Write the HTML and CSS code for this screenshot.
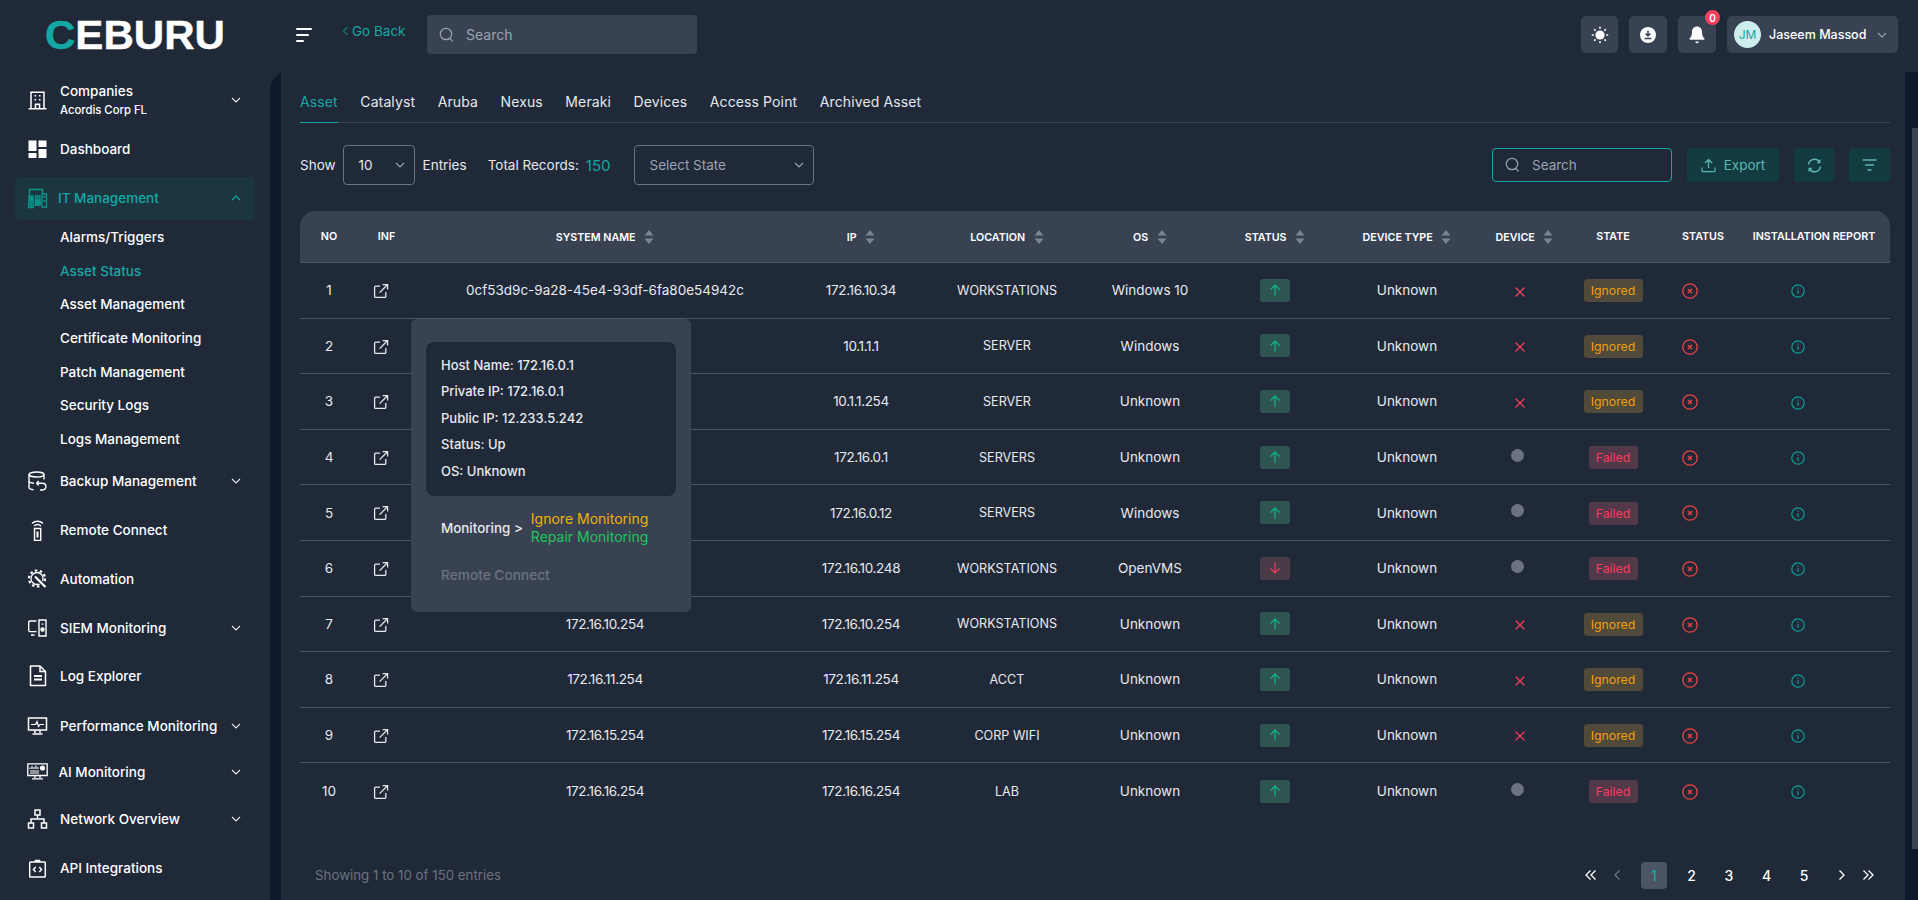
FILE: index.html
```html
<!DOCTYPE html>
<html lang="en">
<head>
<meta charset="utf-8">
<title>Asset Status</title>
<link rel="stylesheet" href="styles.css">
</head>
<body>
<svg class="defs" width="0" height="0" aria-hidden="true">
  <symbol id="i-chev" viewBox="0 0 12 12"><path d="M2 4l4 4 4-4" fill="none" stroke="currentColor" stroke-width="1.1"/></symbol>
  <symbol id="i-sort" viewBox="0 0 10 14"><path d="M5 0l4.500 5.500h-9z M5 14l4.500-5.500h-9z" fill="#7b8494"/></symbol>
  <symbol id="i-ext" viewBox="0 0 16 16"><path d="M7 3.200H2.600c-.6 0-1 .4-1 1v9.200c0 .6.400 1 1 1h9.200c.6 0 1-.4 1-1V9M6.600 9.600L14.400 1.800M9.600 1.600h5v5" fill="none" stroke="#e5e7eb" stroke-width="1.300"/></symbol>
  <symbol id="i-up" viewBox="0 0 14 14"><path d="M7 12.500V2M2.500 6.500L7 2l4.500 4.500" fill="none" stroke="#10b981" stroke-width="1.200"/></symbol>
  <symbol id="i-down" viewBox="0 0 14 14"><path d="M7 1.500V12M2.500 7.500L7 12l4.500-4.500" fill="none" stroke="#f43f5e" stroke-width="1.200"/></symbol>
  <symbol id="i-x" viewBox="0 0 12 12"><path d="M1.500 1.500l9 9M10.500 1.500l-9 9" fill="none" stroke="#f43f5e" stroke-width="1.300"/></symbol>
  <symbol id="i-cx" viewBox="0 0 16 16"><circle cx="8" cy="8" r="7.200" fill="none" stroke="#ef4444" stroke-width="1.300"/><path d="M6 6l4 4M10 6l-4 4" fill="none" stroke="#ef4444" stroke-width="1.300"/></symbol>
  <symbol id="i-info" viewBox="0 0 14 14"><circle cx="7" cy="7" r="6.200" fill="none" stroke="#0f9d9a" stroke-width="1.200"/><path d="M7 6.200v3.800M7 3.600v1.200" fill="none" stroke="#0f9d9a" stroke-width="1.200"/></symbol>
  <symbol id="i-prev" viewBox="0 0 10 12"><path d="M7.500 1.500L3 6l4.500 4.500" fill="none" stroke="currentColor" stroke-width="1.300"/></symbol>
  <symbol id="i-next" viewBox="0 0 10 12"><path d="M2.500 1.500L7 6l-4.500 4.500" fill="none" stroke="currentColor" stroke-width="1.300"/></symbol>
  <symbol id="i-first" viewBox="0 0 12 12"><path d="M5.500 1.500L1 6l4.500 4.500M10.500 1.500L6 6l4.500 4.500" fill="none" stroke="currentColor" stroke-width="1.300"/></symbol>
  <symbol id="i-last" viewBox="0 0 12 12"><path d="M1.500 1.500L6 6l-4.500 4.500M6.500 1.500L11 6l-4.500 4.500" fill="none" stroke="currentColor" stroke-width="1.300"/></symbol>
</svg>

<header class="topbar">
  <div class="brand">
    <svg class="logo" width="190" height="45" viewBox="0 0 190 45"><text x="1" y="37" textLength="180" lengthAdjust="spacingAndGlyphs" class="logo-text"><tspan class="logo-c">C</tspan>EBURU</text></svg>
  </div>
  <button class="hamburger" aria-label="Menu"><span class="bar-a"></span><span class="bar-b"></span><span class="bar-c"></span></button>
  <a class="goback"><svg width="7" height="10" viewBox="0 0 7 10"><path d="M5.500 1L1.500 5l4 4" fill="none" stroke="currentColor" stroke-width="1"/></svg>Go Back</a>
  <div class="top-search">
    <svg width="15" height="16" viewBox="0 0 15 16"><circle cx="7" cy="7" r="5.700" fill="none" stroke="#9ca3af" stroke-width="1.200"/><path d="M11 11.500l2.500 3" stroke="#9ca3af" stroke-width="1.200"/></svg>
    <span>Search</span>
  </div>
  <div class="top-actions">
    <button class="tbtn tbtn-sun" aria-label="Theme">
      <svg width="18" height="18" viewBox="0 0 18 18"><circle cx="9" cy="9" r="4.600" fill="#fff"/><g stroke="#fff" stroke-width="1.600"><path d="M9 .8v2M9 15.200v2M.8 9h2M15.200 9h2M3.200 3.200l1.400 1.400M13.400 13.400l1.400 1.400M3.200 14.800l1.400-1.400M13.400 4.600l1.400-1.400"/></g></svg>
    </button>
    <button class="tbtn" aria-label="Download">
      <svg width="16" height="16" viewBox="0 0 16 16"><circle cx="8" cy="8" r="8" fill="#fff"/><path d="M8 3.500v5M5.500 6.500L8 9l2.500-2.500M4.500 11.500h7" fill="none" stroke="#394253" stroke-width="1.500"/></svg>
    </button>
    <button class="tbtn tbtn-bell" aria-label="Notifications">
      <svg width="16" height="18" viewBox="0 0 16 18"><path d="M8 .5c-3 0-5 2.300-5 5.200 0 4-1.200 5.500-2.400 6.800-.4.500-.1 1.200.5 1.200h13.800c.6 0 .9-.7.5-1.200C14.200 11.200 13 9.700 13 5.700 13 2.800 11 .5 8 .5z" fill="#fff"/><path d="M6.200 15.500h3.600c-.2 1-.9 1.700-1.800 1.700s-1.600-.7-1.800-1.700z" fill="#fff"/></svg>
      <span class="badge">0</span>
    </button>
    <div class="user">
      <span class="avatar">JM</span>
      <span class="user-name">Jaseem Massod</span>
      <svg class="user-chev" width="12" height="12"><use href="#i-chev"/></svg>
    </div>
  </div>
</header>

<div class="shell">
  <aside class="sidebar">
    <div class="nav-item nav-company">
      <svg class="nav-icon" width="20" height="20" viewBox="0 0 20 20"><path d="M3.500 18.500V2.200h13v16.300M1 18.700h18M8 18.500v-4.300h4v4.300" fill="none" stroke="#fff" stroke-width="1.500"/><path d="M7 5h1.600v1.600H7zM11.400 5H13v1.600h-1.600zM7 9h1.600v1.600H7zM11.400 9H13v1.600h-1.600z" fill="#fff"/></svg>
      <span class="nav-label"><span>Companies</span><small>Acordis Corp FL</small></span>
      <svg class="nav-chev" width="12" height="12"><use href="#i-chev"/></svg>
    </div>
    <div class="nav-item nav-dash">
      <svg class="nav-icon" width="20" height="20" viewBox="0 0 20 20"><path d="M1 1.500h8v10.500H1zM11 1.500h8v6.500h-8zM1 14h8v5H1zM11 10h8v9h-8z" fill="#fff"/></svg>
      <span class="nav-label">Dashboard</span>
    </div>
    <div class="nav-item nav-open">
      <svg class="nav-icon" width="20" height="22" viewBox="0 0 20 22" fill="none" stroke="#0d9488" stroke-width="1.300"><path d="M2 9V2.500h13V7"/><path d="M1.500 15v-6h4v6M1 16h5v4.500H1zM8 9h4.500v9H8zM14.500 7H19v13h-4.500z"/><circle cx="3.500" cy="18.300" r="1" fill="#0d9488"/><path d="M9 11h2.500M15.500 10h2.500M15.500 14h2.500"/><path d="M8 13h4.500v5H8zM2 10.500h3v3.500H2z" fill="#0d9488"/></svg>
      <span class="nav-label">IT Management</span>
      <svg class="nav-chev chev-up" width="12" height="12"><use href="#i-chev"/></svg>
    </div>
    <ul class="subnav">
      <li>Alarms/Triggers</li>
      <li class="sub-active">Asset Status</li>
      <li>Asset Management</li>
      <li>Certificate Monitoring</li>
      <li>Patch Management</li>
      <li>Security Logs</li>
      <li>Logs Management</li>
    </ul>
    <div class="nav-item nav-backup">
      <svg class="nav-icon" width="20" height="20" viewBox="0 0 20 20" fill="none" stroke="#fff" stroke-width="1.400"><ellipse cx="9" cy="3.500" rx="7.500" ry="2.500"/><path d="M1.500 3.500v13c0 1.200 2 2 4.500 2.200M16.500 3.500v5M1.500 10c0 1.200 2.500 2 5 2.200"/><path d="M9 12.200h6a3.400 3.400 0 0 1 0 6.800h-2.500M9 12.200l2.200-2.200M9 12.200l2.200 2.200"/></svg>
      <span class="nav-label">Backup Management</span>
      <svg class="nav-chev" width="12" height="12"><use href="#i-chev"/></svg>
    </div>
    <div class="nav-item nav-lift">
      <svg class="nav-icon" width="20" height="22" viewBox="0 0 20 22" fill="none" stroke="#fff" stroke-width="1.400"><path d="M4.500 4.500c3-3 8-3 11 0M6.500 7c2-1.700 5-1.700 7 0"/><path d="M7 9.500h6.200v12H7z"/><path d="M10 12.500v6" stroke-width="2"/></svg>
      <span class="nav-label">Remote Connect</span>
    </div>
    <div class="nav-item">
      <svg class="nav-icon" width="20" height="20" viewBox="0 0 20 20" fill="none" stroke="#fff"><circle cx="9.500" cy="9.500" r="8" stroke-width="2.200" stroke-dasharray="2.600 2.430"/><circle cx="9.500" cy="9.500" r="6" stroke-width="1.300"/><path d="M7 7l11 11" stroke="#202938" stroke-width="4.500"/><path d="M7.500 7.500l10.500 10.500" stroke-width="2.200"/></svg>
      <span class="nav-label">Automation</span>
    </div>
    <div class="nav-item nav-siem">
      <svg class="nav-icon" width="20" height="18" viewBox="0 0 20 18" fill="none" stroke="#fff" stroke-width="1.400"><path d="M9 2H2.500c-.8 0-1.300.5-1.300 1.300v8c0 .8.500 1.300 1.300 1.300H9M3.500 16H7"/><path d="M11.500 1h7v16h-7z"/><circle cx="15" cy="10.500" r="1.500" fill="#fff"/><path d="M15 4.500v1.200" stroke-width="1.800"/></svg>
      <span class="nav-label">SIEM Monitoring</span>
      <svg class="nav-chev" width="12" height="12"><use href="#i-chev"/></svg>
    </div>
    <div class="nav-item nav-log">
      <svg class="nav-icon" width="20" height="22" viewBox="0 0 20 22" fill="none" stroke="#fff" stroke-width="1.500"><path d="M3 1h9.500L18 6.500v14H3z" stroke-linejoin="round"/><path d="M12.500 1v5.500H18"/><path d="M6.500 11h8M6.500 14.500h8" stroke-width="1.800"/></svg>
      <span class="nav-label">Log Explorer</span>
    </div>
    <div class="nav-item nav-perf">
      <svg class="nav-icon" width="20" height="18" viewBox="0 0 20 18" fill="none" stroke="#fff" stroke-width="1.500"><path d="M1 1h18v12H1zM7.500 13v3M12.500 13v3M5 17h10"/><path d="M3.500 7.500h4.500l1.500-3 1.500 5 1.500-2h4" stroke-width="1.200"/></svg>
      <span class="nav-label">Performance Monitoring</span>
      <svg class="nav-chev" width="12" height="12"><use href="#i-chev"/></svg>
    </div>
    <div class="nav-item nav-ai">
      <svg class="nav-icon" width="21" height="17" viewBox="0 0 21 17" fill="none" stroke="#fff" stroke-width="1.100"><path d="M.8.800h19.400v11.700H.8zM8 12.500v2.500M13 12.500v2.500M5 15.800h11" stroke-width="1.300"/><path d="M3 10h9M3 8h9"/><path d="M3 6V4.500M5 6V3M7 6V4M9 6V2.500M11 6V4" stroke-width="1.200"/><circle cx="15.500" cy="5" r="2" fill="#fff"/></svg>
      <span class="nav-label">AI Monitoring</span>
      <svg class="nav-chev" width="12" height="12"><use href="#i-chev"/></svg>
    </div>
    <div class="nav-item nav-net">
      <svg class="nav-icon" width="20" height="20" viewBox="0 0 20 20" fill="none" stroke="#fff" stroke-width="1.500"><path d="M7.500 1h5v5h-5zM1 14h5v5H1zM14 14h5v5h-5zM10 6v4M3.500 14v-4h13v4"/></svg>
      <span class="nav-label">Network Overview</span>
      <svg class="nav-chev" width="12" height="12"><use href="#i-chev"/></svg>
    </div>
    <div class="nav-item">
      <svg class="nav-icon" width="20" height="20" viewBox="0 0 20 20" fill="none" stroke="#fff" stroke-width="1.500"><path d="M3 4h14c.5 0 .8.300.8.800v13.400c0 .5-.3.800-.8.800H3c-.5 0-.8-.3-.8-.8V4.800c0-.5.300-.8.800-.8zM8 4V2.500h4V4"/><path d="M8.200 9L6 11.500 8.200 14M11.800 9l2.200 2.500-2.200 2.500"/></svg>
      <span class="nav-label">API Integrations</span>
    </div>
  </aside>

  <main class="main">
    <div class="panel">
      <nav class="tabs">
        <a class="tab tab-active">Asset</a>
        <a class="tab">Catalyst</a>
        <a class="tab">Aruba</a>
        <a class="tab">Nexus</a>
        <a class="tab">Meraki</a>
        <a class="tab">Devices</a>
        <a class="tab">Access Point</a>
        <a class="tab">Archived Asset</a>
      </nav>

      <div class="toolbar">
        <span class="lbl">Show</span>
        <div class="select select-size"><span>10</span><svg width="12" height="12"><use href="#i-chev"/></svg></div>
        <span class="lbl lbl-entries">Entries</span>
        <span class="lbl lbl-total">Total Records:</span>
        <span class="total-num">150</span>
        <div class="select select-state"><span>Select State</span><svg width="12" height="12"><use href="#i-chev"/></svg></div>
        <div class="tool-search">
          <svg width="15" height="16" viewBox="0 0 15 16"><circle cx="7" cy="7" r="5.700" fill="none" stroke="#9ca3af" stroke-width="1.200"/><path d="M11 11.500l2.500 3" stroke="#9ca3af" stroke-width="1.200"/></svg>
          <span>Search</span>
        </div>
        <button class="tool-btn btn-export"><svg width="15" height="15" viewBox="0 0 15 15"><path d="M7.500 10V1.500M4 5l3.500-3.500L11 5M1 9.500v3.200c0 .6.400 1 1 1h11c.6 0 1-.4 1-1V9.500" fill="none" stroke="#5eb6b3" stroke-width="1.200"/></svg>Export</button>
        <button class="tool-btn btn-icon" aria-label="Refresh"><svg width="15" height="15" viewBox="0 0 15 15"><path d="M1.500 6.500A6 6 0 0 1 12.500 4M13.500 8.500A6 6 0 0 1 2.500 11" fill="none" stroke="#5eb6b3" stroke-width="1.500"/><path d="M13.500 1v4.300H9.500zM1.500 14v-4.300h4z" fill="#5eb6b3"/></svg></button>
        <button class="tool-btn btn-icon btn-filter" aria-label="Filter"><svg width="15" height="12" viewBox="0 0 15 12"><path d="M.5 1h14M3 6h9M5.500 11h4" stroke="#5eb6b3" stroke-width="1.400"/></svg></button>
      </div>

      <div class="table">
        <div class="row head">
          <div class="c">NO</div>
          <div class="c">INF</div>
          <div class="c">SYSTEM NAME <svg class="sort" width="10" height="14"><use href="#i-sort"/></svg></div>
          <div class="c">IP <svg class="sort" width="10" height="14"><use href="#i-sort"/></svg></div>
          <div class="c">LOCATION <svg class="sort" width="10" height="14"><use href="#i-sort"/></svg></div>
          <div class="c">OS <svg class="sort" width="10" height="14"><use href="#i-sort"/></svg></div>
          <div class="c">STATUS <svg class="sort" width="10" height="14"><use href="#i-sort"/></svg></div>
          <div class="c">DEVICE TYPE <svg class="sort" width="10" height="14"><use href="#i-sort"/></svg></div>
          <div class="c">DEVICE <svg class="sort" width="10" height="14"><use href="#i-sort"/></svg></div>
          <div class="c">STATE</div>
          <div class="c">STATUS</div>
          <div class="c c-last">INSTALLATION REPORT</div>
        </div>

        <div class="row">
          <div class="c">1</div><div class="c"><svg class="ext" width="16" height="16"><use href="#i-ext"/></svg></div>
          <div class="c">0cf53d9c-9a28-45e4-93df-6fa80e54942c</div><div class="c num">172.16.10.34</div><div class="c loc">WORKSTATIONS</div><div class="c">Windows 10</div>
          <div class="c"><span class="updown up"><svg width="14" height="14"><use href="#i-up"/></svg></span></div><div class="c">Unknown</div>
          <div class="c"><svg class="dev" width="12" height="12"><use href="#i-x"/></svg></div><div class="c"><span class="pill ignored">Ignored</span></div>
          <div class="c"><svg class="cx" width="16" height="16"><use href="#i-cx"/></svg></div><div class="c c-last"><svg class="info" width="14" height="14"><use href="#i-info"/></svg></div>
        </div>
        <div class="row">
          <div class="c">2</div><div class="c"><svg class="ext" width="16" height="16"><use href="#i-ext"/></svg></div>
          <div class="c"></div><div class="c num">10.1.1.1</div><div class="c loc">SERVER</div><div class="c">Windows</div>
          <div class="c"><span class="updown up"><svg width="14" height="14"><use href="#i-up"/></svg></span></div><div class="c">Unknown</div>
          <div class="c"><svg class="dev" width="12" height="12"><use href="#i-x"/></svg></div><div class="c"><span class="pill ignored">Ignored</span></div>
          <div class="c"><svg class="cx" width="16" height="16"><use href="#i-cx"/></svg></div><div class="c c-last"><svg class="info" width="14" height="14"><use href="#i-info"/></svg></div>
        </div>
        <div class="row">
          <div class="c">3</div><div class="c"><svg class="ext" width="16" height="16"><use href="#i-ext"/></svg></div>
          <div class="c"></div><div class="c num">10.1.1.254</div><div class="c loc">SERVER</div><div class="c">Unknown</div>
          <div class="c"><span class="updown up"><svg width="14" height="14"><use href="#i-up"/></svg></span></div><div class="c">Unknown</div>
          <div class="c"><svg class="dev" width="12" height="12"><use href="#i-x"/></svg></div><div class="c"><span class="pill ignored">Ignored</span></div>
          <div class="c"><svg class="cx" width="16" height="16"><use href="#i-cx"/></svg></div><div class="c c-last"><svg class="info" width="14" height="14"><use href="#i-info"/></svg></div>
        </div>
        <div class="row">
          <div class="c">4</div><div class="c"><svg class="ext" width="16" height="16"><use href="#i-ext"/></svg></div>
          <div class="c"></div><div class="c num">172.16.0.1</div><div class="c loc">SERVERS</div><div class="c">Unknown</div>
          <div class="c"><span class="updown up"><svg width="14" height="14"><use href="#i-up"/></svg></span></div><div class="c">Unknown</div>
          <div class="c"><span class="dot"></span></div><div class="c"><span class="pill failed">Failed</span></div>
          <div class="c"><svg class="cx" width="16" height="16"><use href="#i-cx"/></svg></div><div class="c c-last"><svg class="info" width="14" height="14"><use href="#i-info"/></svg></div>
        </div>
        <div class="row">
          <div class="c">5</div><div class="c"><svg class="ext" width="16" height="16"><use href="#i-ext"/></svg></div>
          <div class="c"></div><div class="c num">172.16.0.12</div><div class="c loc">SERVERS</div><div class="c">Windows</div>
          <div class="c"><span class="updown up"><svg width="14" height="14"><use href="#i-up"/></svg></span></div><div class="c">Unknown</div>
          <div class="c"><span class="dot"></span></div><div class="c"><span class="pill failed">Failed</span></div>
          <div class="c"><svg class="cx" width="16" height="16"><use href="#i-cx"/></svg></div><div class="c c-last"><svg class="info" width="14" height="14"><use href="#i-info"/></svg></div>
        </div>
        <div class="row">
          <div class="c">6</div><div class="c"><svg class="ext" width="16" height="16"><use href="#i-ext"/></svg></div>
          <div class="c"></div><div class="c num">172.16.10.248</div><div class="c loc">WORKSTATIONS</div><div class="c">OpenVMS</div>
          <div class="c"><span class="updown down"><svg width="14" height="14"><use href="#i-down"/></svg></span></div><div class="c">Unknown</div>
          <div class="c"><span class="dot"></span></div><div class="c"><span class="pill failed">Failed</span></div>
          <div class="c"><svg class="cx" width="16" height="16"><use href="#i-cx"/></svg></div><div class="c c-last"><svg class="info" width="14" height="14"><use href="#i-info"/></svg></div>
        </div>
        <div class="row">
          <div class="c">7</div><div class="c"><svg class="ext" width="16" height="16"><use href="#i-ext"/></svg></div>
          <div class="c num">172.16.10.254</div><div class="c num">172.16.10.254</div><div class="c loc">WORKSTATIONS</div><div class="c">Unknown</div>
          <div class="c"><span class="updown up"><svg width="14" height="14"><use href="#i-up"/></svg></span></div><div class="c">Unknown</div>
          <div class="c"><svg class="dev" width="12" height="12"><use href="#i-x"/></svg></div><div class="c"><span class="pill ignored">Ignored</span></div>
          <div class="c"><svg class="cx" width="16" height="16"><use href="#i-cx"/></svg></div><div class="c c-last"><svg class="info" width="14" height="14"><use href="#i-info"/></svg></div>
        </div>
        <div class="row">
          <div class="c">8</div><div class="c"><svg class="ext" width="16" height="16"><use href="#i-ext"/></svg></div>
          <div class="c num">172.16.11.254</div><div class="c num">172.16.11.254</div><div class="c loc">ACCT</div><div class="c">Unknown</div>
          <div class="c"><span class="updown up"><svg width="14" height="14"><use href="#i-up"/></svg></span></div><div class="c">Unknown</div>
          <div class="c"><svg class="dev" width="12" height="12"><use href="#i-x"/></svg></div><div class="c"><span class="pill ignored">Ignored</span></div>
          <div class="c"><svg class="cx" width="16" height="16"><use href="#i-cx"/></svg></div><div class="c c-last"><svg class="info" width="14" height="14"><use href="#i-info"/></svg></div>
        </div>
        <div class="row">
          <div class="c">9</div><div class="c"><svg class="ext" width="16" height="16"><use href="#i-ext"/></svg></div>
          <div class="c num">172.16.15.254</div><div class="c num">172.16.15.254</div><div class="c loc">CORP WIFI</div><div class="c">Unknown</div>
          <div class="c"><span class="updown up"><svg width="14" height="14"><use href="#i-up"/></svg></span></div><div class="c">Unknown</div>
          <div class="c"><svg class="dev" width="12" height="12"><use href="#i-x"/></svg></div><div class="c"><span class="pill ignored">Ignored</span></div>
          <div class="c"><svg class="cx" width="16" height="16"><use href="#i-cx"/></svg></div><div class="c c-last"><svg class="info" width="14" height="14"><use href="#i-info"/></svg></div>
        </div>
        <div class="row row-last">
          <div class="c">10</div><div class="c"><svg class="ext" width="16" height="16"><use href="#i-ext"/></svg></div>
          <div class="c num">172.16.16.254</div><div class="c num">172.16.16.254</div><div class="c loc">LAB</div><div class="c">Unknown</div>
          <div class="c"><span class="updown up"><svg width="14" height="14"><use href="#i-up"/></svg></span></div><div class="c">Unknown</div>
          <div class="c"><span class="dot"></span></div><div class="c"><span class="pill failed">Failed</span></div>
          <div class="c"><svg class="cx" width="16" height="16"><use href="#i-cx"/></svg></div><div class="c c-last"><svg class="info" width="14" height="14"><use href="#i-info"/></svg></div>
        </div>

        <div class="popup">
          <div class="popup-info">
            <p>Host Name: 172.16.0.1</p>
            <p>Private IP: 172.16.0.1</p>
            <p>Public IP: 12.233.5.242</p>
            <p>Status: Up</p>
            <p>OS: Unknown</p>
          </div>
          <div class="popup-mon">
            <span>Monitoring &gt;</span>
            <span class="mon-links"><a class="amber">Ignore Monitoring</a><a class="green">Repair Monitoring</a></span>
          </div>
          <div class="popup-remote">Remote Connect</div>
        </div>
      </div>

      <footer class="foot">
        <span class="showing">Showing 1 to 10 of 150 entries</span>
        <div class="pager">
          <span class="pg pg-arrow" aria-label="First"><svg width="12" height="12"><use href="#i-first"/></svg></span>
          <span class="pg pg-arrow pg-dim" aria-label="Previous"><svg width="10" height="12"><use href="#i-prev"/></svg></span>
          <span class="pg pg-cur">1</span>
          <span class="pg">2</span>
          <span class="pg">3</span>
          <span class="pg">4</span>
          <span class="pg">5</span>
          <span class="pg pg-arrow" aria-label="Next"><svg width="10" height="12"><use href="#i-next"/></svg></span>
          <span class="pg pg-arrow" aria-label="Last"><svg width="12" height="12"><use href="#i-last"/></svg></span>
        </div>
      </footer>
    </div>
    <div class="track"><div class="thumb"></div></div>
  </main>
</div>
</body>
</html>
```

FILE: styles.css
```css
* { box-sizing: border-box; }
html, body { margin: 0; height: 100%; }
body {
  background: #202938;
  color: #e8eaee;
  font-family: "Inter", "Liberation Sans", sans-serif;
  font-size: 13.5px;
  overflow: hidden;
  height: 900px;
}
.defs { position: absolute; }
button { font: inherit; border: 0; color: inherit; padding: 0; cursor: pointer; }

/* top bar */
.topbar { height: 72px; display: flex; align-items: center; padding-bottom: 3px; position: relative; }
.brand { width: 296px; padding-left: 44px; display: flex; height: 45px; align-items: center; }
.logo-text { font-family: "Liberation Sans", sans-serif; font-weight: 700; font-size: 40px; fill: #fff; stroke: #fff; stroke-width: .4px; }
.logo-c { fill: #14a8a5; stroke: #14a8a5; }
.hamburger { background: none; width: 17px; height: 14px; display: flex; flex-direction: column; justify-content: space-between; margin-right: 29px; }
.hamburger span { display: block; height: 2px; background: #fff; border-radius: 1px; }
.bar-a { width: 16px; } .bar-b { width: 13px; } .bar-c { width: 8px; }
.goback { color: #14a8a5; width: 85px; font-size: 13.5px; display: flex; gap: 3px; align-items: center; margin-top: -8px; white-space: nowrap; }
.top-search { width: 270px; height: 39px; background: #394253; border-radius: 4px; display: flex; align-items: center; gap: 12px; padding-left: 12px; color: #9ca3af; font-size: 14px; }
.top-actions { margin-left: auto; display: flex; gap: 11px; padding-right: 20px; }
.tbtn { width: 38px; height: 37px; background: #394253; border-radius: 5px; display: flex; align-items: center; justify-content: center; position: relative; }
.tbtn-sun { width: 37px; }
.badge { position: absolute; top: -6px; right: -4px; width: 15px; height: 15px; border-radius: 50%; background: #f43f5e; color: #fff; font-size: 10px; font-weight: 600; display: flex; align-items: center; justify-content: center; }
.user { width: 171px; height: 37px; background: #394253; border-radius: 5px; display: flex; align-items: center; padding-left: 7px; }
.avatar { width: 27px; height: 27px; border-radius: 50%; background: #cdeeeb; color: #14a8a5; display: flex; align-items: center; justify-content: center; font-size: 12px; }
.user-name { margin-left: 8px; font-size: 12.5px; font-weight: 500; color: #fff; white-space: nowrap; }
.user-chev { margin-left: auto; margin-right: 10px; color: #9ca3af; }

/* frame */
.shell { display: flex; height: 828px; }
.sidebar { width: 270px; flex: none; padding-top: 6px; position: relative; }
.nav-item { height: 48.5px; display: flex; align-items: center; padding-left: 27px; padding-right: 28px; font-size: 13.5px; font-weight: 500; color: #fff; white-space: nowrap; }
.nav-icon { flex: none; width: 21px; margin-right: 12px; }
.nav-label { display: flex; flex-direction: column; gap: 4px; line-height: 16px; }
.nav-label small { font-size: 11.3px; font-weight: 500; line-height: 14px; }
.nav-chev { margin-left: auto; flex: none; color: #e5e7eb; }
.chev-up { transform: rotate(180deg); color: #14a8a5; }
.nav-company { height: 44px; }
.nav-dash { height: 44px; margin-top: 5px; margin-bottom: 6px; }
.nav-open { height: 43px; margin: 0 15px; padding-left: 12px; padding-right: 13px; padding-bottom: 2px; background: #1c3640; border-radius: 5px; color: #14a8a5; }
.nav-open .nav-icon { margin-right: 10px; }
.nav-backup { margin-top: 1px; }
.nav-lift { margin-top: .5px; }
.nav-siem { margin-top: 1px; }
.nav-log { margin-top: -1px; }
.nav-perf { margin-top: 1.5px; }
.nav-ai { margin-top: -2.500px; }
.nav-ai .nav-label { margin-left: -1.5px; }
.nav-net { margin-top: -1px; }
.subnav { list-style: none; margin: 0; padding: 0 0 0 60px; }
.subnav li { height: 33.7px; display: flex; align-items: center; font-size: 13.5px; font-weight: 500; color: #fff; }
.subnav .sub-active { color: #14a8a5; }

/* main */
.main { flex: 1; display: flex; background: #0f172a; border-top-left-radius: 18px; padding-left: 11px; min-width: 0; }
.panel { flex: 1; background: #202938; padding: 0 15px 0 19px; min-width: 0; position: relative; }
.track { width: 13px; flex: none; padding: 56px 0 0 7px; }
.thumb { width: 6px; height: 721px; background: #3b4454; }

.tabs { height: 51px; display: flex; align-items: flex-end; gap: 22.5px; border-bottom: 1px solid #394253; }
.tab { height: 38px; padding-top: 8px; font-size: 14px; letter-spacing: .12px; color: #e5e7eb; border-bottom: 1px solid transparent; margin-bottom: -1px; }
.tab-active { color: #14a8a5; border-bottom: 1px solid #14a8a5; }

.toolbar { margin-top: 22px; height: 40px; display: flex; align-items: center; }
.lbl { font-size: 13.5px; color: #e5e7eb; white-space: nowrap; }
.select { height: 40px; border: 1px solid #6b7280; border-radius: 4px; display: flex; align-items: center; justify-content: space-between; padding: 0 8px 0 15px; color: #e5e7eb; }
.select svg { color: #9ca3af; }
.select-size { width: 72px; margin-left: 7px; }
.lbl-entries { margin-left: 8px; }
.lbl-total { margin-left: 21px; }
.total-num { margin-left: 7px; color: #14a8a5; font-size: 15px; }
.select-state { width: 180px; margin-left: 23px; color: #9ca3af; }
.tool-search { margin-left: auto; width: 180px; height: 34px; border: 1px solid #14a8a5; border-radius: 4px; display: flex; align-items: center; gap: 12px; padding-left: 12px; color: #9ca3af; }
.tool-btn { height: 34px; background: #123c42; color: #5eb6b3; border-radius: 4px; display: flex; align-items: center; justify-content: center; gap: 8px; margin-left: 15px; }
.btn-export { width: 92px; }
.btn-icon { width: 40px; }
.btn-filter { width: 41px; }

.table { margin-top: 26px; position: relative; }
.row { display: grid; grid-template-columns: 58px 57px 380px 132px 160px 126px 124px 140px 95px 82px 98px 1fr; height: 55.6px; border-bottom: 1px solid #4b5563; align-items: center; }
.row-last { border-bottom: 0; }
.head { height: 52px; background: #394253; border-radius: 15px 15px 0 0; font-size: 10.7px; font-weight: 600; color: #fff; }
.c { text-align: center; white-space: nowrap; }
.c-last { padding-right: 14px; }
.num { letter-spacing: -.35px; }
.loc { font-size: 12.6px; }
.sort { vertical-align: -3px; margin-left: 6px; }
.ext { display: inline-block; vertical-align: middle; margin-right: 12px; }
.dev { display: inline-block; vertical-align: middle; margin-right: 10px; }
.cx { display: inline-block; vertical-align: middle; margin-right: 26px; }
.info { display: inline-block; vertical-align: middle; margin-right: 32px; }
.updown { display: inline-flex; width: 30px; height: 23px; align-items: center; justify-content: center; border-radius: 3px; vertical-align: middle; }
.up { background: #2f5553; }
.down { background: #4b3a47; }
.pill { display: inline-flex; height: 23px; align-items: center; justify-content: center; border-radius: 3px; font-size: 12.3px; vertical-align: middle; margin-top: 1px; }
.ignored { width: 59px; background: #4f4a3a; color: #f59e0b; }
.failed { width: 49px; background: #51394a; color: #f43f5e; }
.dot { display: inline-block; width: 13px; height: 13px; border-radius: 50%; background: #6b7280; vertical-align: middle; margin-right: 15px; margin-top: -6px; }

/* popup over the table */
.popup { position: absolute; left: 111px; top: 108px; width: 280px; height: 293px; background: #394253; border-radius: 6px; padding: 23px 15px 0; }
.popup-info { height: 154px; background: #202938; border-radius: 8px; padding: 10px 15px; }
.popup-info p { margin: 0; height: 26.4px; line-height: 26.4px; font-size: 13px; font-weight: 500; color: #e8eaee; white-space: nowrap; }
.popup-mon { display: flex; align-items: center; gap: 8px; padding-left: 15px; margin-top: 14px; font-size: 13.4px; font-weight: 500; }
.mon-links { display: flex; flex-direction: column; line-height: 18.4px; font-size: 14px; font-weight: 400; }
.amber { color: #eab308; }
.green { color: #22c55e; }
.popup-remote { margin: 20px 0 0 15px; font-size: 13.7px; font-weight: 500; color: #6b7280; }

.foot { position: relative; margin-top: 43px; display: flex; align-items: center; justify-content: space-between; padding-left: 15px; height: 27px; }
.showing { color: #6b7280; font-size: 13.3px; }
.pager { display: flex; align-items: center; position: absolute; left: 1278px; }
.pg { width: 26px; height: 27px; margin-right: 11.5px; display: flex; align-items: center; justify-content: center; font-weight: 500; font-size: 14px; color: #fff; border-radius: 4px; }
.pg-arrow { margin-right: 0; }
.pg-dim { color: #6b7280; margin-right: 11px; }
.pg-cur { background: #4b5563; color: #14a8a5; }
```
